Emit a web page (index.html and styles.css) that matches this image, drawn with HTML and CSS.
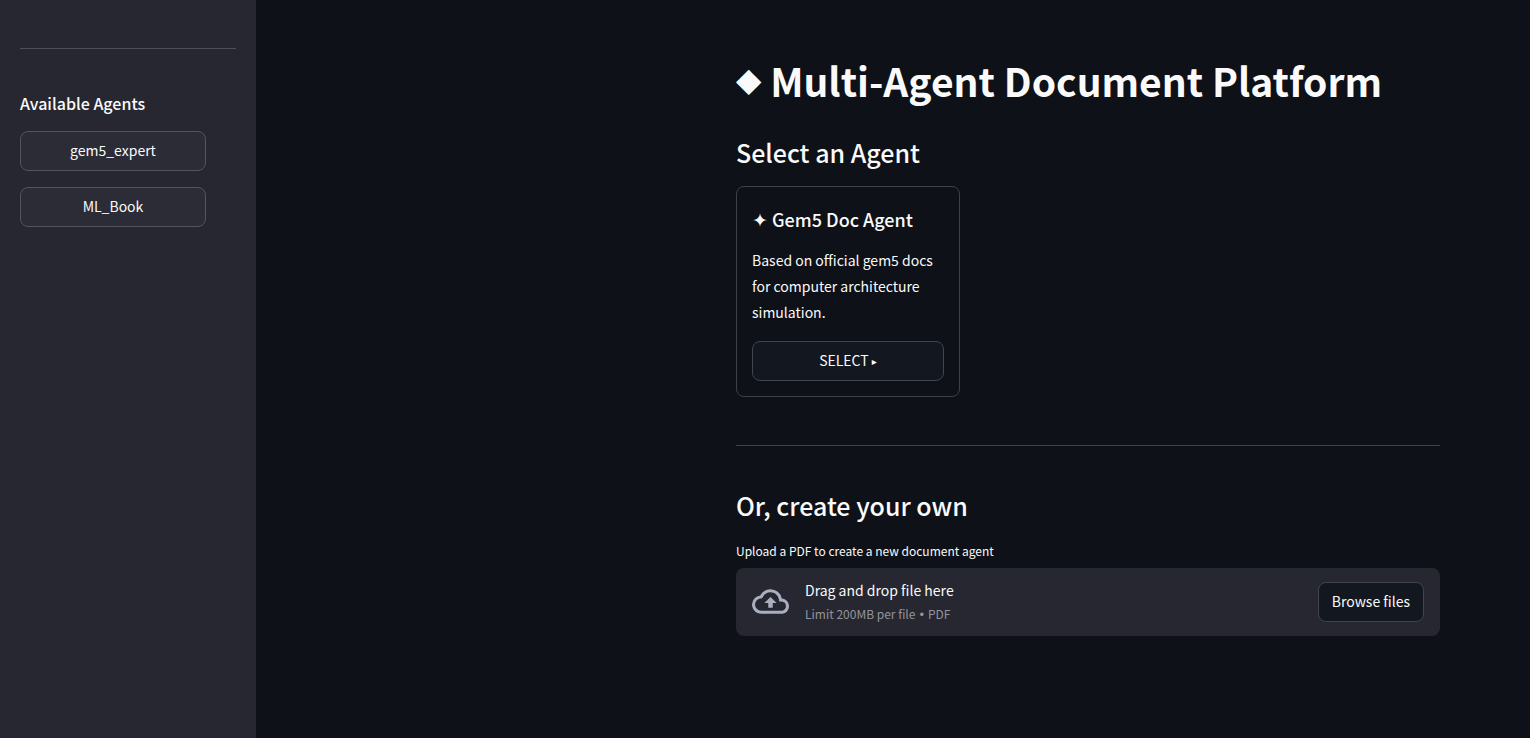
FILE: index.html
```html
<!DOCTYPE html>
<html lang="en">
<head>
<meta charset="utf-8">
<title>Multi-Agent Document Platform</title>
<meta name="viewport" content="width=device-width, initial-scale=1">
<link rel="stylesheet" href="styles.css">
</head>
<body>
<div class="app">
  <aside class="sidebar">
    <hr class="divider">
    <h2 class="sidebar-title">Available Agents</h2>
    <nav class="agent-list" aria-label="Available agents">
      <button class="button" type="button">gem5_expert</button>
      <button class="button" type="button">ML_Book</button>
    </nav>
  </aside>
  <main class="main">
    <div class="content">
      <h1 class="title"><span class="title-mark">◆</span> Multi-Agent Document Platform</h1>
      <h2 class="heading">Select an Agent</h2>
      <div class="cards">
        <article class="card">
          <h3 class="card-title"><span class="card-mark">✦</span> Gem5 Doc Agent</h3>
          <p class="card-text">Based on official gem5 docs for computer architecture simulation.</p>
          <button class="button" type="button">SELECT <span class="arrow">▸</span></button>
        </article>
      </div>
      <hr class="divider section-divider">
      <h2 class="heading">Or, create your own</h2>
      <p class="upload-label" id="upload-label">Upload a PDF to create a new document agent</p>
      <section class="dropzone" aria-labelledby="upload-label">
        <svg class="cloud" viewBox="0 0 24 24" aria-hidden="true"><path fill="currentColor" d="M19.35 10.04A7.49 7.49 0 0 0 12 4C9.11 4 6.6 5.64 5.35 8.04A5.994 5.994 0 0 0 0 14c0 3.31 2.69 6 6 6h13c2.76 0 5-2.24 5-5 0-2.64-2.05-4.78-4.65-4.96zM19 18H6c-2.21 0-4-1.79-4-4 0-2.05 1.53-3.76 3.56-3.97l1.07-.11.5-.95A5.469 5.469 0 0 1 12 6c2.62 0 4.88 1.86 5.39 4.43l.3 1.5 1.53.11A2.98 2.98 0 0 1 22 15c0 1.65-1.35 3-3 3zM8 13h2.55v3h2.9v-3H16l-4-4z"/></svg>
        <div class="drop-info">
          <span class="drop-title">Drag and drop file here</span>
          <small class="drop-limit">Limit 200MB per file <span class="bullet">•</span> PDF</small>
        </div>
        <button class="button browse" type="button">Browse files</button>
      </section>
    </div>
  </main>
</div>
</body>
</html>
```
FILE: styles.css
```css
* { box-sizing: border-box; }

body {
  margin: 0;
  background: #0e1117;
  color: #fafafa;
  font-family: "Noto Sans CJK SC", "Noto Sans", sans-serif;
  font-size: 14px;
  line-height: 26px;
}

h1, h2, h3, p { margin: 0; }

.app {
  display: flex;
  min-height: 100vh;
}

.sidebar {
  flex: 0 0 256px;
  padding: 48px 20px;
  background: #262730;
}

.divider {
  height: 1px;
  margin: 0;
  border: 0;
  background: #4f5057;
}

.sidebar-title {
  margin: 42px 0 16px;
  font-size: 16px;
  font-weight: 500;
  line-height: 24px;
}

.agent-list {
  display: flex;
  flex-direction: column;
  gap: 16px;
  margin-right: 30px;
}

.button {
  width: 100%;
  height: 40px;
  padding: 0 12px 2px;
  border: 1px solid #41444c;
  border-radius: 8px;
  background: #131720;
  color: inherit;
  font: inherit;
  white-space: nowrap;
  cursor: pointer;
}

.sidebar .button {
  border-color: #53545c;
  background: #2b2c36;
}

.main {
  flex: 1;
  min-width: 0;
  padding: 54px 90px 48px 48px;
}

.content {
  max-width: 704px;
  margin-left: auto;
}

.title {
  font-size: 39px;
  font-weight: 700;
  line-height: 52px;
}

.title-mark {
  display: inline-block;
  font-family: "DejaVu Sans", sans-serif;
  font-size: 33px;
  font-weight: 400;
  line-height: 52px;
  vertical-align: top;
}

.heading {
  font-size: 25px;
  font-weight: 500;
  line-height: 36px;
}

.title + .heading { margin: 28px 0 16px; }

.cards {
  display: grid;
  grid-template-columns: repeat(3, 1fr);
  gap: 16px;
}

.card {
  padding: 15px;
  border: 1px solid #3e4147;
  border-radius: 8px;
}

.card-title {
  margin: 4px 0 15px;
  font-size: 18px;
  font-weight: 500;
  line-height: 26px;
}

.card-mark,
.arrow,
.bullet {
  font-family: "DejaVu Sans", sans-serif;
  line-height: 1;
}

.card-mark { font-size: 19px; }

.arrow {
  font-size: 10px;
  vertical-align: 1px;
}

.card-text { margin-bottom: 16px; }

.section-divider {
  margin: 48px 0 41px;
  background: #3e4147;
}

.upload-label {
  margin: 16px 0 5px;
  font-size: 12px;
  line-height: 24px;
}

.dropzone {
  display: flex;
  align-items: center;
  gap: 16px;
  padding: 10px 16px;
  border-radius: 8px;
  background: #262730;
}

.cloud {
  flex: none;
  width: 37px;
  height: 37px;
  margin-bottom: 2px;
  color: #a9aec0;
}

.drop-info {
  display: flex;
  flex: 1;
  flex-direction: column;
}

.drop-title,
.drop-limit { line-height: 24px; }

.drop-limit {
  color: #93949b;
  font-size: 12px;
}

.browse {
  width: auto;
  padding: 0 13px 2px;
}
```
